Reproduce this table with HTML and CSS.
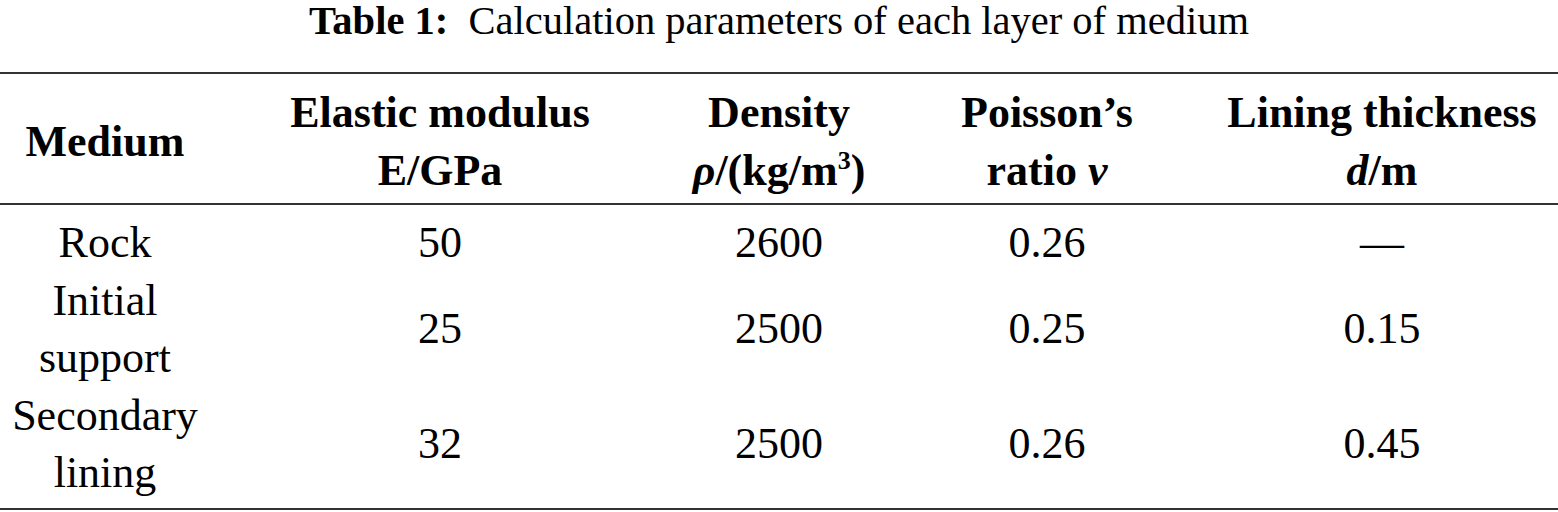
FILE: index.html
```html
<!DOCTYPE html>
<html lang="en">
<head>
    <meta charset="UTF-8">
    <meta name="viewport" content="width=device-width, initial-scale=1.0">
    <title>Table 1: Calculation parameters of each layer of medium</title>
    <link rel="stylesheet" href="styles.css">
</head>
<body>

<table class="tabla">
    <caption><strong>Table 1:</strong>&nbsp;&nbsp;Calculation parameters of each layer of medium</caption>
    <colgroup>
        <col class="col-medio">
        <col class="col-modulo">
        <col class="col-densidad">
        <col class="col-poisson">
        <col class="col-espesor">
    </colgroup>
    <thead>
        <tr>
            <th>Medium</th>
            <th>Elastic modulus<br>E/GPa</th>
            <th>Density<br><i>ρ</i>/(kg/m<sup>3</sup>)</th>
            <th>Poisson’s<br>ratio <i>v</i></th>
            <th>Lining thickness<br><i>d</i>/m</th>
        </tr>
    </thead>
    <tbody>
        <tr>
            <td>Rock</td>
            <td>50</td>
            <td>2600</td>
            <td>0.26</td>
            <td>—</td>
        </tr>
        <tr>
            <td>Initial<br>support</td>
            <td>25</td>
            <td>2500</td>
            <td>0.25</td>
            <td>0.15</td>
        </tr>
        <tr>
            <td>Secondary<br>lining</td>
            <td>32</td>
            <td>2500</td>
            <td>0.26</td>
            <td>0.45</td>
        </tr>
    </tbody>
</table>

</body>
</html>
```

FILE: styles.css
```css
body {
    font-family: "Liberation Serif", "DejaVu Serif", serif;
    margin: 0;
    padding: 0;
    background-color: #ffffff;
    color: #000000;
}

.tabla {
    width: 1558px;
    border-collapse: collapse;
    table-layout: fixed;
    font-size: 44px;
    line-height: 57.5px;
    border-bottom: 2px solid #333;
}

.tabla caption {
    font-size: 40.5px;
    line-height: 41px;
    padding-top: 0;
    padding-bottom: 31px;
    text-align: center;
}

.col-medio { width: 210px; }
.col-modulo { width: 460px; }
.col-densidad { width: 218px; }
.col-poisson { width: 318px; }
.col-espesor { width: 352px; }

thead tr {
    border-top: 2px solid #333;
    border-bottom: 2px solid #333;
}

th {
    font-weight: bold;
    text-align: center;
    vertical-align: middle;
    padding: 10px 0 4px;
}

th sup {
    font-size: 26px;
    line-height: 0;
    vertical-align: 16px;
}

td {
    text-align: center;
    vertical-align: middle;
    padding: 0;
}

tbody tr:first-child td {
    padding-top: 9px;
}

tbody tr:last-child td {
    padding-bottom: 6px;
}
```
